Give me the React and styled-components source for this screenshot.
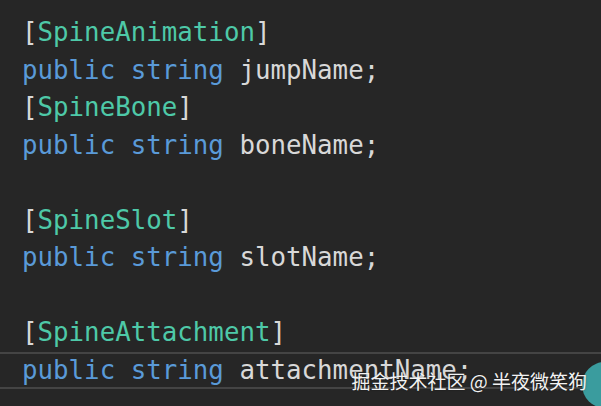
import React from 'react';
import styled, { createGlobalStyle } from 'styled-components';

const GlobalStyle = createGlobalStyle`
  html, body {
    margin: 0;
    padding: 0;
    background: #262626;
  }
`;

const lines = [
  [['b', '['], ['t', 'SpineAnimation'], ['b', ']']],
  [['k', 'public'], ['b', ' '], ['k', 'string'], ['b', ' jumpName;']],
  [['b', '['], ['t', 'SpineBone'], ['b', ']']],
  [['k', 'public'], ['b', ' '], ['k', 'string'], ['b', ' boneName;']],
  [],
  [['b', '['], ['t', 'SpineSlot'], ['b', ']']],
  [['k', 'public'], ['b', ' '], ['k', 'string'], ['b', ' slotName;']],
  [],
  [['b', '['], ['t', 'SpineAttachment'], ['b', ']']],
  [['k', 'public'], ['b', ' '], ['k', 'string'], ['b', ' attachmentName;']],
];

const App = () => {
  return (
    <Editor>
      <GlobalStyle />
      <Code>
        {lines.map((tokens, i) => (
          <Line key={i} current={i === 9}>
            {tokens.length === 0 ? '\u00a0' : tokens.map(([kind, text], j) => (
              <Token key={j} kind={kind}>{text}</Token>
            ))}
          </Line>
        ))}
      </Code>
      <Avatar />
      <Watermark>掘金技术社区 @ 半夜微笑狗</Watermark>
    </Editor>
  );
};

export default App;

const Editor = styled.div`
  position: relative;
  width: 601px;
  height: 406px;
  overflow: hidden;
  background: #262626;
`;

const Code = styled.div`
  padding-top: 14px;
  font-family: 'DejaVu Sans Mono', 'Liberation Mono', monospace;
  font-size: 25.8px;
  white-space: pre;
`;

const Line = styled.div`
  height: 37.5px;
  line-height: 37.5px;
  padding-left: 22px;
  box-sizing: border-box;
  box-shadow: ${(props) => (props.current ? 'inset 0 2px 0 #444444, inset 0 -2px 0 #444444' : 'none')};
`;

const colors = {
  b: '#d8d8d8',
  t: '#4ec9a8',
  k: '#5a9ad8',
};

const Token = styled.span`
  color: ${(props) => colors[props.kind]};
`;

const Avatar = styled.div`
  position: absolute;
  left: 582px;
  top: 362px;
  width: 46px;
  height: 46px;
  border-radius: 50%;
  background: #3a9c9e;
`;

const Watermark = styled.div`
  position: absolute;
  right: 14px;
  top: 367px;
  font-family: 'Noto Sans CJK SC', sans-serif;
  font-size: 19px;
  line-height: 28px;
  color: #f2f2f2;
  text-shadow: 0 0 2px rgba(0, 0, 0, 0.4);
  white-space: pre;
`;
